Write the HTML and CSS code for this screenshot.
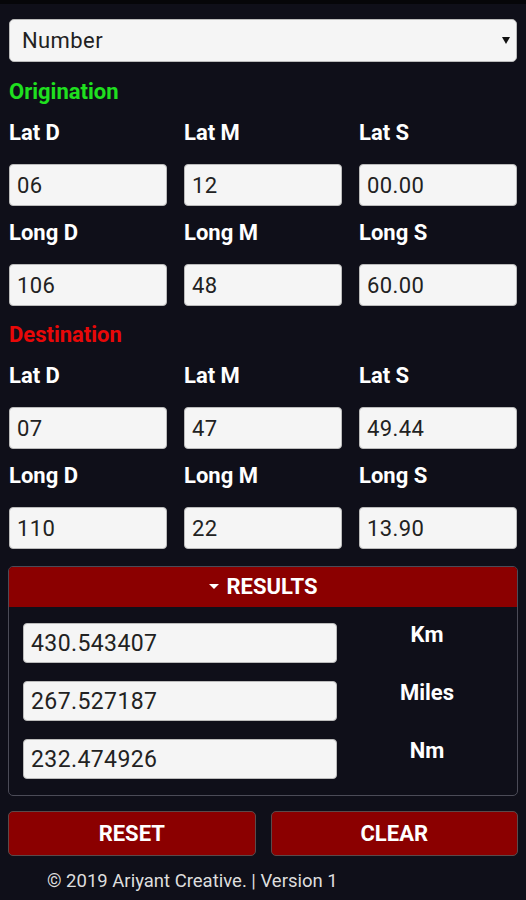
FILE: index.html
```html
<!DOCTYPE html>
<html lang="en">
<head>
    <meta charset="utf-8">
    <title>Distance Calculator</title>
    <link rel="stylesheet" href="styles.css">
</head>
<body>
    <div class="selector">
        <select class="modo">
            <option>Number</option>
        </select>
        <span class="flecha"></span>
    </div>

    <h2 class="titulo origen">Origination</h2>
    <div class="grupo">
        <div class="campo"><label>Lat D</label><input type="text" value="06"></div>
        <div class="campo"><label>Lat M</label><input type="text" value="12"></div>
        <div class="campo"><label>Lat S</label><input type="text" value="00.00"></div>
        <div class="campo"><label>Long D</label><input type="text" value="106"></div>
        <div class="campo"><label>Long M</label><input type="text" value="48"></div>
        <div class="campo"><label>Long S</label><input type="text" value="60.00"></div>
    </div>

    <h2 class="titulo destino">Destination</h2>
    <div class="grupo">
        <div class="campo"><label>Lat D</label><input type="text" value="07"></div>
        <div class="campo"><label>Lat M</label><input type="text" value="47"></div>
        <div class="campo"><label>Lat S</label><input type="text" value="49.44"></div>
        <div class="campo"><label>Long D</label><input type="text" value="110"></div>
        <div class="campo"><label>Long M</label><input type="text" value="22"></div>
        <div class="campo"><label>Long S</label><input type="text" value="13.90"></div>
    </div>

    <div class="resultados">
        <div class="cabecera"><span class="triangulo"></span>RESULTS</div>
        <div class="filas">
            <input type="text" value="430.543407"><span class="unidad">Km</span>
            <input type="text" value="267.527187"><span class="unidad">Miles</span>
            <input type="text" value="232.474926"><span class="unidad">Nm</span>
        </div>
    </div>

    <div class="botones">
        <button>RESET</button>
        <button>CLEAR</button>
    </div>

    <p class="pie">&copy; 2019 Ariyant Creative. | Version 1</p>
</body>
</html>
```

FILE: styles.css
```css
body {
    font-family: Roboto, "Liberation Sans", sans-serif;
    margin: 0;
    padding: 15px 8px 0;
    background-color: #0f0f19;
    border-top: 4px solid #060609;
    color: #fff;
}
.selector {
    position: relative;
    margin: 0 1px;
}
.modo {
    -webkit-appearance: none;
    appearance: none;
    width: 100%;
    height: 43px;
    padding: 0 12px;
    font-family: Roboto, sans-serif;
    font-size: 22px;
    letter-spacing: 0.4px;
    color: #222;
    background-color: #f5f5f5;
    border: 1px solid #bbb;
    border-radius: 5px;
    display: block;
}
.flecha {
    position: absolute;
    right: 7px;
    top: 18px;
    border-left: 4px solid transparent;
    border-right: 4px solid transparent;
    border-top: 7px solid #111;
}
.titulo {
    font-size: 22px;
    font-weight: bold;
    line-height: 24px;
    margin: 18px 1px 17px;
}
.origen {
    color: #1fe01f;
}
.destino {
    color: #e80808;
    margin-top: 17px;
}
.grupo {
    display: grid;
    grid-template-columns: repeat(3, 1fr);
    column-gap: 17px;
    row-gap: 15px;
    margin: 0 1px;
}
label {
    display: block;
    font-size: 22px;
    font-weight: bold;
    line-height: 24px;
    margin-bottom: 19px;
}
input[type="text"] {
    width: 100%;
    height: 42px;
    padding: 0 7px;
    font-family: Roboto, sans-serif;
    font-size: 22px;
    letter-spacing: 0.4px;
    color: #222;
    background-color: #f5f5f5;
    border: 1px solid #bbb;
    border-radius: 4px;
    box-sizing: border-box;
    display: block;
}
.resultados {
    margin-top: 17px;
    border: 1px solid #4b4b57;
    border-radius: 5px;
    overflow: hidden;
}
.cabecera {
    height: 40px;
    line-height: 40px;
    background-color: #8b0000;
    text-align: center;
    font-size: 22px;
    font-weight: bold;
}
.triangulo {
    display: inline-block;
    vertical-align: middle;
    margin: -4px 8px 0 0;
    border-left: 5px solid transparent;
    border-right: 5px solid transparent;
    border-top: 5px solid #fff;
}
.filas {
    display: grid;
    grid-template-columns: 314px 1fr;
    row-gap: 18px;
    padding: 16px 0 16px 14px;
}
.filas input[type="text"] {
    height: 40px;
    font-size: 23px;
}
.unidad {
    text-align: center;
    font-size: 22px;
    font-weight: bold;
    line-height: 24px;
}
.botones {
    display: grid;
    grid-template-columns: 1fr 1fr;
    column-gap: 15px;
    margin-top: 15px;
}
button {
    height: 45px;
    background-color: #8b0000;
    color: #fff;
    border: 1px solid #5a4a4a;
    border-radius: 5px;
    font-family: Roboto, sans-serif;
    font-size: 22px;
    font-weight: bold;
}
.pie {
    margin: 14px 0 0 39px;
    font-size: 18.5px;
    color: #dedede;
}
```
